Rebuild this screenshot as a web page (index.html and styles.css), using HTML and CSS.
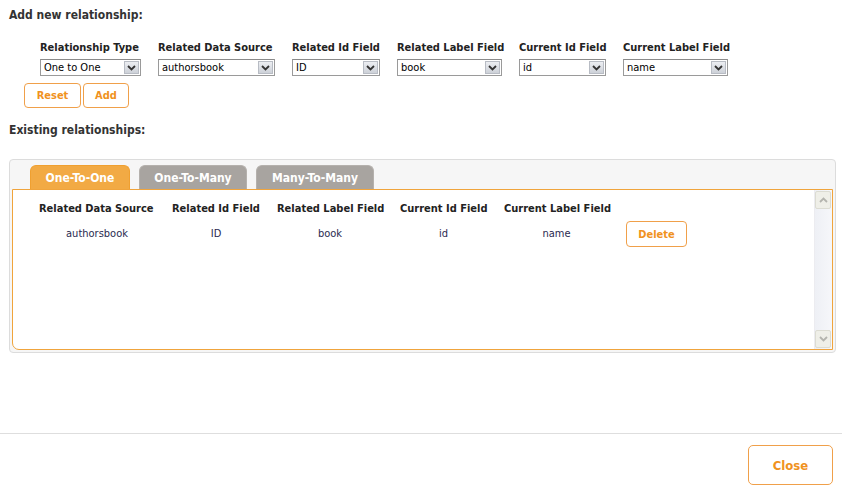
FILE: index.html
```html
<!DOCTYPE html>
<html>
<head>
<meta charset="utf-8">
<link rel="stylesheet" href="styles.css">
</head>
<body>
<div class="page">
  <h2 class="section-title">Add new relationship:</h2>
  <div class="new-rel">
    <div class="fld-label">Relationship Type</div>
    <div class="fld-label">Related Data Source</div>
    <div class="fld-label">Related Id Field</div>
    <div class="fld-label">Related Label Field</div>
    <div class="fld-label">Current Id Field</div>
    <div class="fld-label">Current Label Field</div>
    <div class="select"><span class="select-value">One to One</span><span class="select-arrow"><svg width="9" height="6" viewBox="0 0 9 6"><path d="M1 1 L4.5 4.5 L8 1" fill="none" stroke="#333" stroke-width="1.8"/></svg></span></div>
    <div class="select"><span class="select-value">authorsbook</span><span class="select-arrow"><svg width="9" height="6" viewBox="0 0 9 6"><path d="M1 1 L4.5 4.5 L8 1" fill="none" stroke="#333" stroke-width="1.8"/></svg></span></div>
    <div class="select"><span class="select-value">ID</span><span class="select-arrow"><svg width="9" height="6" viewBox="0 0 9 6"><path d="M1 1 L4.5 4.5 L8 1" fill="none" stroke="#333" stroke-width="1.8"/></svg></span></div>
    <div class="select"><span class="select-value">book</span><span class="select-arrow"><svg width="9" height="6" viewBox="0 0 9 6"><path d="M1 1 L4.5 4.5 L8 1" fill="none" stroke="#333" stroke-width="1.8"/></svg></span></div>
    <div class="select"><span class="select-value">id</span><span class="select-arrow"><svg width="9" height="6" viewBox="0 0 9 6"><path d="M1 1 L4.5 4.5 L8 1" fill="none" stroke="#333" stroke-width="1.8"/></svg></span></div>
    <div class="select"><span class="select-value">name</span><span class="select-arrow"><svg width="9" height="6" viewBox="0 0 9 6"><path d="M1 1 L4.5 4.5 L8 1" fill="none" stroke="#333" stroke-width="1.8"/></svg></span></div>
  </div>
  <div class="actions">
    <button class="btn btn-reset">Reset</button><button class="btn btn-add">Add</button>
  </div>
  <h2 class="section-title existing-title">Existing relationships:</h2>
  <div class="panel">
    <div class="tabs">
      <div class="tab active">One-To-One</div>
      <div class="tab tab-many">One-To-Many</div>
      <div class="tab tab-mtm">Many-To-Many</div>
    </div>
    <div class="tab-content">
      <div class="rel-table">
        <div class="th c1">Related Data Source</div>
        <div class="th c2">Related Id Field</div>
        <div class="th c3">Related Label Field</div>
        <div class="th c4">Current Id Field</div>
        <div class="th c5">Current Label Field</div>
        <div class="th c6"></div>
        <div class="td">authorsbook</div>
        <div class="td">ID</div>
        <div class="td">book</div>
        <div class="td">id</div>
        <div class="td">name</div>
        <div class="td"><button class="btn btn-delete">Delete</button></div>
      </div>
      <div class="scrollbar">
        <div class="sb-btn"><svg width="9" height="6" viewBox="0 0 9 6"><path d="M1 5 L4.5 1.5 L8 5" fill="none" stroke="#b4b4ae" stroke-width="1.8"/></svg></div>
        <div class="sb-track"></div>
        <div class="sb-btn"><svg width="9" height="6" viewBox="0 0 9 6"><path d="M1 1 L4.5 4.5 L8 1" fill="none" stroke="#b4b4ae" stroke-width="1.8"/></svg></div>
      </div>
    </div>
  </div>
</div>
<footer class="footer">
  <button class="btn btn-close">Close</button>
</footer>
</body>
</html>
```
FILE: styles.css
```css
html, body {
  margin: 0;
  padding: 0;
  background: #ffffff;
}
body {
  font-family: "DejaVu Sans Condensed", "DejaVu Sans", sans-serif;
  font-size: 11px;
  color: #222;
  width: 842px;
  height: 489px;
  position: relative;
  overflow: hidden;
}
.page {
  padding: 0 6px 0 9px;
  height: 433px;
}
.section-title {
  margin: 0;
  padding-top: 7px;
  font-size: 12px;
  line-height: 16px;
  font-weight: bold;
  color: #333;
}
.new-rel {
  margin: 17px 0 0 31px;
  display: grid;
  grid-template-columns: 101px 117px 88px 105px 87px 105px;
  column-gap: 17px;
  row-gap: 3px;
}
.fld-label {
  font-weight: bold;
  color: #222;
  line-height: 16px;
  white-space: nowrap;
}
.select {
  height: 17px;
  box-sizing: border-box;
  border: 1px solid #9a9a9a;
  border-top-color: #8a8a8a;
  display: flex;
  align-items: stretch;
  background: #fff;
}
.select-value {
  flex: 1;
  padding-left: 3px;
  line-height: 15px;
  color: #000;
  white-space: nowrap;
  overflow: hidden;
}
.select-arrow {
  width: 15px;
  margin: 1px;
  background: linear-gradient(#eceef2, #cdd1d8);
  border: 1px solid #b8bcc4;
  box-sizing: border-box;
  display: flex;
  align-items: center;
  justify-content: center;
}
.actions {
  margin: 7px 0 0 15px;
  display: flex;
  gap: 2px;
}
.btn {
  font-family: inherit;
  font-weight: bold;
  font-size: 11px;
  color: #f0921e;
  background: #fff;
  border: 1px solid #f0a04a;
  border-radius: 4px;
  cursor: pointer;
  padding: 0;
}
.btn-reset {
  width: 57px;
  height: 25px;
}
.btn-add {
  width: 46px;
  height: 25px;
}
.existing-title {
  padding-top: 14px;
}
.panel {
  margin-top: 21px;
  height: 194px;
  box-sizing: border-box;
  background: #f6f6f6;
  border: 1px solid #dcdcdc;
  border-radius: 4px;
  padding: 5px 2px 2px 2px;
  display: flex;
  flex-direction: column;
}
.tabs {
  display: flex;
  gap: 9px;
  padding-left: 18px;
  height: 25px;
}
.tab {
  height: 25px;
  box-sizing: border-box;
  border-radius: 6px 6px 0 0;
  color: #fff;
  font-weight: bold;
  font-size: 12px;
  line-height: 25px;
  text-align: center;
  background: #a8a4a0;
  border: 1px solid #b5b1ad;
  border-bottom: none;
}
.tab.active {
  width: 100px;
  background: #f2aa44;
  border-color: #f0a030;
}
.tab-many {
  width: 108px;
}
.tab-mtm {
  width: 118px;
}
.tab-content {
  flex: 1;
  background: #fff;
  border: 1px solid #f0a43c;
  border-radius: 0 0 0 7px;
  display: flex;
  margin-top: -1px;
}
.rel-table {
  flex: 1;
  display: grid;
  grid-template-columns: 116px 88px 106px 87px 105px 61px;
  grid-auto-rows: min-content;
  column-gap: 17px;
  padding: 12px 0 0 26px;
  align-content: start;
}
.th {
  font-weight: bold;
  color: #222;
  line-height: 14px;
  white-space: nowrap;
}
.td {
  text-align: center;
  color: #2a2a50;
  line-height: 26px;
  margin-top: 5px;
  display: flex;
  justify-content: center;
  align-items: center;
}
.btn-delete {
  width: 62px;
  height: 26px;
}
.scrollbar {
  width: 17px;
  display: flex;
  flex-direction: column;
  background: linear-gradient(90deg, #eef0f5, #f6f7fa);
  border-left: 1px solid #ececf0;
}
.sb-btn {
  height: 16px;
  margin: 1px 1px 1px 0;
  background: #efefe8;
  border: 1px solid #dcdcd2;
  border-radius: 2px;
  display: flex;
  align-items: center;
  justify-content: center;
}
.sb-track {
  flex: 1;
}
.footer {
  border-top: 1px solid #dedede;
  height: 55px;
  display: flex;
  justify-content: flex-end;
  align-items: flex-start;
  padding: 11px 9px 0 0;
  box-sizing: border-box;
}
.btn-close {
  width: 85px;
  height: 40px;
  font-size: 13px;
  border-radius: 5px;
}
```
